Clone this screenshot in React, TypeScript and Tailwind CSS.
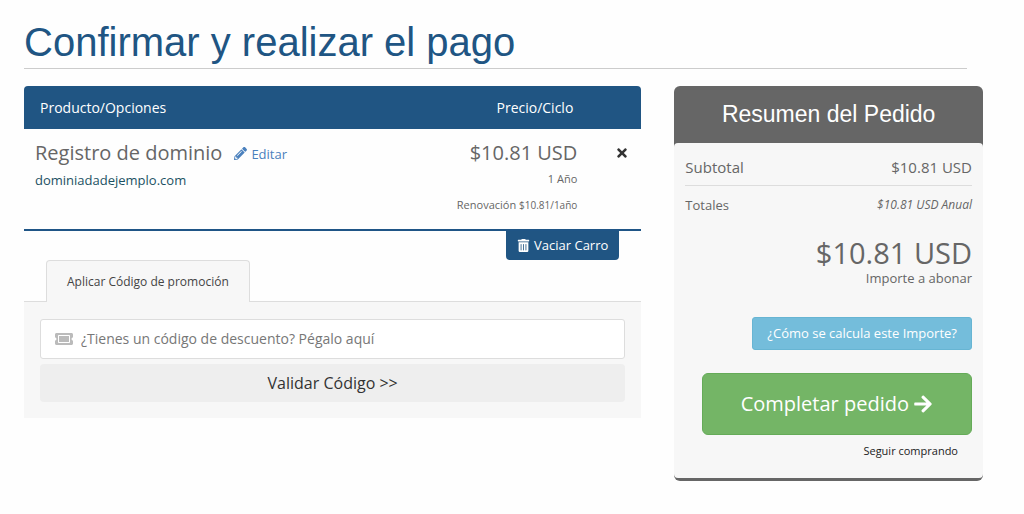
import React, { useState } from 'react';
import { FaArrowRight, FaPencilAlt, FaTicketAlt, FaTimes, FaTrashAlt } from 'react-icons/fa';

interface CartItem {
  id: number;
  name: string;
  domain: string;
  price: string;
  cycle: string;
  renewal: string;
}

const items: CartItem[] = [
  {
    id: 1,
    name: 'Registro de dominio',
    domain: 'dominiadadejemplo.com',
    price: '$10.81 USD',
    cycle: '1 Año',
    renewal: '$10.81/1año'
  }
];

const CartTable: React.FC = () => (
  <table className="w-full border-b-2 border-[#1f5586]">
    <thead>
      <tr className="h-[43px] text-sm text-white">
        <th className="rounded-tl bg-[#205583] pl-4 text-left font-normal">Producto/Opciones</th>
        <th className="bg-[#205583] pr-1 text-right font-normal">Precio/Ciclo</th>
        <th className="w-16 rounded-tr bg-[#205583]"></th>
      </tr>
    </thead>
    <tbody>
      {items.map(item => (
        <tr key={item.id} className="align-top text-[#666]">
          <td className="pt-3 pl-[11px]">
            <div className="flex items-baseline gap-3">
              <span className="text-xl leading-6">{item.name}</span>
              <a href="#editar" className="flex items-center gap-1 text-[13px] leading-6 text-[#4a80bd]">
                <FaPencilAlt size={13} />
                Editar
              </a>
            </div>
            <div className="pt-0.5 text-[13px] leading-6 text-[#1c5163]">{item.domain}</div>
          </td>
          <td className="pt-3 pb-3 text-right">
            <div className="text-xl leading-6">{item.price}</div>
            <div className="pt-0.5 text-[11px] leading-6">{item.cycle}</div>
            <div className="pt-0.5 text-[11px] leading-6">
              Renovación <span className="text-[10px]">{item.renewal}</span>
            </div>
          </td>
          <td className="pt-3">
            <button aria-label="Eliminar" className="flex h-6 w-full items-center justify-end pr-3 text-[#333]">
              <FaTimes size={14} />
            </button>
          </td>
        </tr>
      ))}
    </tbody>
  </table>
);

const PromoForm: React.FC = () => {
  const [code, setCode] = useState('');

  return (
    <div>
      <div className="flex px-[22px]">
        <button className="relative -mb-px h-[42px] rounded-t border border-b-0 border-[#ddd] bg-[#f7f7f7] px-5 text-xs text-[#444]">
          Aplicar Código de promoción
        </button>
      </div>
      <form className="border-t border-[#ddd] bg-[#f7f7f7] px-4 pt-[17px] pb-4" onSubmit={e => e.preventDefault()}>
        <label className="flex h-10 items-center gap-2 rounded-[3px] border border-[#ddd] bg-white px-3.5">
          <FaTicketAlt size={18} className="text-[#bbb]" />
          <input
            className="min-w-0 flex-1 text-sm outline-none placeholder:text-[#777]"
            placeholder="¿Tienes un código de descuento? Pégalo aquí"
            aria-label="Código de descuento"
            value={code}
            onChange={e => setCode(e.target.value)}
          />
        </label>
        <button className="mt-[5px] h-[38px] w-full rounded bg-[#eee] text-base text-[#333]">
          Validar Código &gt;&gt;
        </button>
      </form>
    </div>
  );
};

const OrderSummary: React.FC = () => (
  <aside className="rounded-md border-b-3 border-[#666] bg-[#666]">
    <h2 className="py-3 text-center font-['Liberation_Sans',sans-serif] text-[23px] leading-[33px] text-white">
      Resumen del Pedido
    </h2>
    <div className="rounded bg-[#f7f7f7] px-[11px] pt-3 pb-[15px] text-[#666]">
      <div className="flex justify-between border-b border-[#ddd] pb-1.5 text-[15px] leading-6">
        <span>Subtotal</span>
        <span>$10.81 USD</span>
      </div>
      <div className="flex justify-between pt-[7px] leading-6">
        <span className="text-[13px]">Totales</span>
        <span className="text-xs leading-6 italic">$10.81 USD Anual</span>
      </div>
      <div className="pt-5 text-right">
        <div className="text-[29px] leading-8">$10.81 USD</div>
        <div className="text-[13px] leading-[18px]">Importe a abonar</div>
      </div>
      <div className="flex flex-col items-end">
        <button className="mt-[30px] h-[33px] rounded-[3px] border border-[#67b5d3] bg-[#74bddb] px-3.5 text-[13px] text-white">
          ¿Cómo se calcula este Importe?
        </button>
        <button className="mt-[23px] flex h-[62px] items-center gap-1 rounded-md border border-[#65ab58] bg-[#74b566] px-[38px] text-xl text-white">
          Completar pedido
          <FaArrowRight size={20} />
        </button>
        <a href="#tienda" className="mt-1 pr-3.5 text-[11px] leading-6 text-[#222]">
          Seguir comprando
        </a>
      </div>
    </div>
  </aside>
);

const App: React.FC = () => {
  return (
    <div className="min-h-screen bg-[#fefefe] pt-5 pr-[41px] pb-8 pl-6 font-['Open_Sans',sans-serif]">
      <h1 className="mr-4 border-b border-[#ccc] pb-1 font-['Liberation_Sans',sans-serif] text-[40px] leading-11 text-[#205583]">
        Confirmar y realizar el pago
      </h1>
      <div className="mt-[17px] grid grid-cols-[2fr_1fr] items-start gap-[33px]">
        <main className="min-w-0">
          <CartTable />
          <div className="flex justify-end pr-[22px]">
            <button className="flex h-[29px] items-center gap-1 rounded-b bg-[#205583] px-[11px] text-[13px] text-white">
              <FaTrashAlt size={13} />
              Vaciar Carro
            </button>
          </div>
          <PromoForm />
        </main>
        <OrderSummary />
      </div>
    </div>
  );
};

export default App;
